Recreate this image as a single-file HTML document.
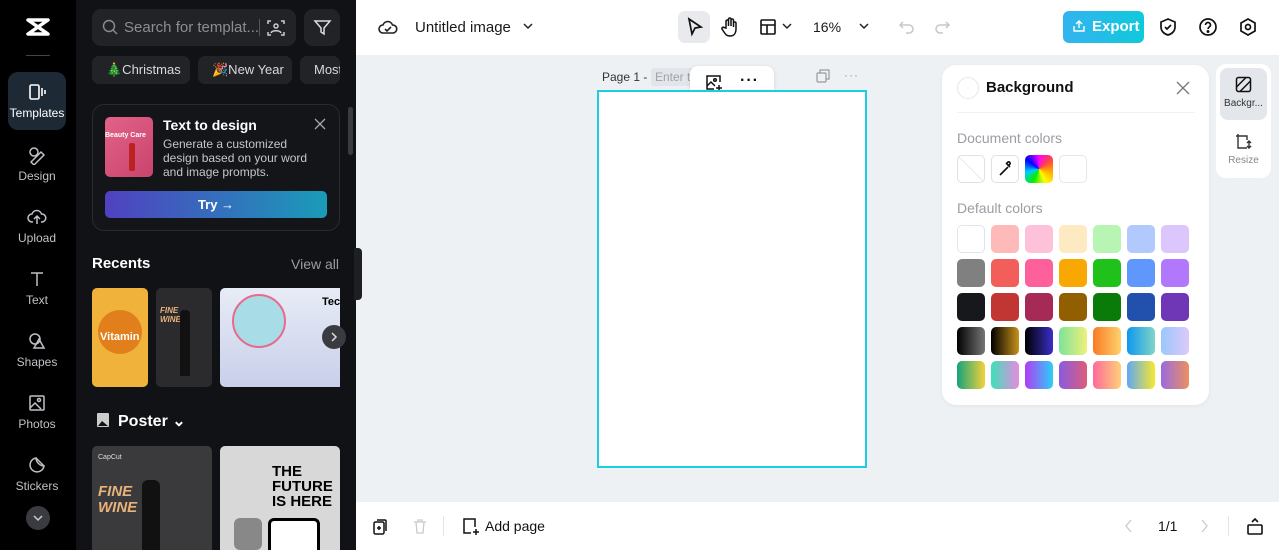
<!DOCTYPE html>
<html><head><meta charset="utf-8"><style>
*{box-sizing:border-box;margin:0;padding:0}
html,body{width:1279px;height:550px;overflow:hidden}
body{font-family:"Liberation Sans",sans-serif;background:#eef1f4;position:relative}
.a{position:absolute}
.rail{left:0;top:0;width:76px;height:550px;background:#000}
.ri{position:absolute;left:8px;width:58px;text-align:center;color:#bfc1c6;font-size:12px}
.ri svg{display:block;margin:0 auto 4px}
.panel{left:76px;top:0;width:280px;height:550px;background:#111215}
.chip{position:absolute;top:56px;height:28px;border-radius:7px;background:#222327;color:#d9dadd;font-size:13px;line-height:28px;padding-left:14px}
.sw{position:absolute;width:28px;height:28px;border-radius:5px}
.top{left:356px;top:0;width:923px;height:55px;background:#fff}
.bot{left:356px;top:502px;width:923px;height:48px;background:#fff}
</style></head><body>
<div class="a rail">
 <svg class="a" style="left:24px;top:16px" width="28" height="22" viewBox="0 0 28 22"><path d="M4 4h20L4 18h20L4 4z" fill="none" stroke="#fff" stroke-width="3.5" stroke-linejoin="round"/></svg>
 <div class="a" style="left:26px;top:55px;width:24px;height:1px;background:#444"></div>
 <div class="ri" style="top:72px;height:58px;background:#1d2a36;border-radius:10px;color:#fff;padding-top:10px"><svg width="20" height="20" viewBox="0 0 20 20" fill="none" stroke="#fff" stroke-width="1.6"><rect x="3" y="3" width="9" height="14" rx="1.5"/><path d="M15 6v8M18 8v4"/></svg>Templates</div>
 <div class="ri" style="top:145px"><svg width="20" height="20" viewBox="0 0 20 20" fill="none" stroke="#bfc1c6" stroke-width="1.5"><circle cx="7" cy="7" r="4"/><path d="M4 17l10-10 3 3-10 10z"/></svg>Design</div>
 <div class="ri" style="top:207px"><svg width="20" height="20" viewBox="0 0 20 20" fill="none" stroke="#bfc1c6" stroke-width="1.5"><path d="M6 15H5a4 4 0 010-8 5 5 0 019.5 0A4 4 0 0115 15h-1M10 17v-7M7 12l3-3 3 3"/></svg>Upload</div>
 <div class="ri" style="top:269px"><svg width="20" height="20" viewBox="0 0 20 20" fill="none" stroke="#bfc1c6" stroke-width="1.5"><path d="M4 4h12M10 4v13"/></svg>Text</div>
 <div class="ri" style="top:331px"><svg width="20" height="20" viewBox="0 0 20 20" fill="none" stroke="#bfc1c6" stroke-width="1.5"><circle cx="8" cy="8" r="5"/><path d="M12 8l5 9H7z"/></svg>Shapes</div>
 <div class="ri" style="top:393px"><svg width="20" height="20" viewBox="0 0 20 20" fill="none" stroke="#bfc1c6" stroke-width="1.5"><rect x="3" y="3" width="14" height="14" rx="1"/><circle cx="12" cy="7" r="1.5"/><path d="M3 15l5-5 6 6"/></svg>Photos</div>
 <div class="ri" style="top:455px"><svg width="20" height="20" viewBox="0 0 20 20" fill="none" stroke="#bfc1c6" stroke-width="1.5"><path d="M17 11A7 7 0 119 3c0 4 4 8 8 8zM9 3l8 8"/></svg>Stickers</div>
 <div class="a" style="left:26px;top:506px;width:24px;height:24px;border-radius:12px;background:#3a3b40"><svg width="24" height="24" viewBox="0 0 24 24"><path d="M8 10l4 4 4-4" fill="none" stroke="#ccc" stroke-width="1.5"/></svg></div>
</div>
<div class="a panel">
 <div class="a" style="left:16px;top:9px;width:204px;height:37px;border-radius:9px;background:#222327;color:#8b8d93;font-size:15px;line-height:37px;padding-left:32px">Search for templat...</div>
 <svg class="a" style="left:26px;top:19px" width="16" height="16" viewBox="0 0 16 16" fill="none" stroke="#8b8d93" stroke-width="1.4"><circle cx="7" cy="7" r="5.5"/><path d="M11 11l4 4"/></svg>
 <div class="a" style="left:183px;top:19px;width:1px;height:17px;background:#555"></div>
 <svg class="a" style="left:190px;top:18px" width="20" height="20" viewBox="0 0 20 20" fill="none" stroke="#ccc" stroke-width="1.5"><path d="M2 6V3h3M15 3h3v3M18 14v3h-3M5 17H2v-3"/><circle cx="10" cy="8" r="2"/><path d="M5 15c1-3 9-3 10 0"/></svg>
 <div class="a" style="left:228px;top:9px;width:36px;height:37px;border-radius:9px;background:#222327"><svg width="36" height="37" viewBox="0 0 36 37" fill="none" stroke="#ddd" stroke-width="1.5"><path d="M11 12h15l-6 7v6l-3-2v-4z"/></svg></div>
 <div class="chip" style="left:16px;width:98px">🎄Christmas</div>
 <div class="chip" style="left:122px;width:94px">🎉New Year</div>
 <div class="chip" style="left:224px;width:40px;overflow:hidden">Most</div>
 <div class="a" style="left:16px;top:104px;width:248px;height:127px;border:1px solid #2a2b30;border-radius:12px;background:#141519"></div>
 <div class="a" style="left:29px;top:117px;width:48px;height:60px;border-radius:5px;background:linear-gradient(135deg,#e3628a,#c9446c)"><div style="color:#fff;font-size:7px;font-weight:bold;margin-top:15px">Beauty Care</div><div style="position:absolute;left:24px;top:26px;width:6px;height:28px;background:#b22;border-radius:2px"></div></div>
 <div class="a" style="left:87px;top:117px;color:#fff;font-size:14px;font-weight:bold">Text to design</div>
 <div class="a" style="left:87px;top:137px;color:#c5c6ca;font-size:12px;line-height:14px;width:156px">Generate a customized design based on your word and image prompts.</div>
 <svg class="a" style="left:238px;top:118px" width="12" height="12" viewBox="0 0 12 12" stroke="#aaa" stroke-width="1.3"><path d="M1 1l10 10M11 1L1 11"/></svg>
 <div class="a" style="left:29px;top:191px;width:222px;height:27px;border-radius:5px;background:linear-gradient(90deg,#5041c0,#1a9bb8);color:#fff;font-size:13px;font-weight:bold;text-align:center;line-height:27px">Try →</div>
 <div class="a" style="left:272px;top:107px;width:5px;height:48px;border-radius:3px;background:#3a3b40"></div>
 <div class="a" style="left:16px;top:255px;color:#fff;font-size:15px;font-weight:bold">Recents</div>
 <div class="a" style="left:215px;top:256px;color:#9a9ca2;font-size:14px">View all</div>
 <div class="a" style="left:16px;top:288px;width:56px;height:99px;border-radius:5px;background:#f0b23a"><div style="position:absolute;left:6px;top:22px;width:44px;height:44px;border-radius:22px;background:#e07f1c"></div><div style="position:absolute;left:8px;top:43px;color:#fff;font-size:11px;font-weight:bold">Vitamin</div></div>
 <div class="a" style="left:80px;top:288px;width:56px;height:99px;border-radius:5px;background:#2b2b2d"><div style="position:absolute;left:4px;top:18px;color:#e8b27a;font-size:8px;font-weight:bold;font-style:italic">FINE<br>WINE</div><div style="position:absolute;left:24px;top:22px;width:10px;height:66px;background:#111;border-radius:4px 4px 0 0"></div></div>
 <div class="a" style="left:144px;top:288px;width:120px;height:99px;border-radius:5px 0 0 5px;background:linear-gradient(#e7ecf6,#c9cfea);overflow:hidden"><div style="position:absolute;left:12px;top:6px;width:54px;height:54px;border-radius:27px;border:2px solid #e86a8c;background:#a8dde8"></div><div style="position:absolute;left:102px;top:8px;font-size:11px;font-weight:bold">Tec</div></div>
 <div class="a" style="left:246px;top:325px;width:24px;height:24px;border-radius:12px;background:#3a3b40"><svg width="24" height="24" viewBox="0 0 24 24"><path d="M10 8l4 4-4 4" fill="none" stroke="#ddd" stroke-width="1.5"/></svg></div>
 <svg class="a" style="left:20px;top:412px" width="14" height="16" viewBox="0 0 14 16"><rect x="1" y="1" width="12" height="14" rx="1" fill="#ccc"/><path d="M2 14l4-5 6 5z" fill="#111"/></svg>
 <div class="a" style="left:42px;top:411px;color:#fff;font-size:16px;font-weight:bold">Poster ⌄</div>
 <div class="a" style="left:16px;top:446px;width:120px;height:104px;border-radius:5px 5px 0 0;background:#3a3a3c"><div style="position:absolute;left:6px;top:38px;color:#e8b27a;font-size:15px;font-weight:bold;font-style:italic;line-height:16px">FINE<br>WINE</div><div style="position:absolute;left:50px;top:34px;width:18px;height:70px;background:#111;border-radius:6px 6px 0 0"></div><div style="position:absolute;left:6px;top:8px;color:#ddd;font-size:7px">CapCut</div></div>
 <div class="a" style="left:144px;top:446px;width:120px;height:104px;border-radius:5px 5px 0 0;background:#d8d8d8;overflow:hidden"><div style="position:absolute;left:52px;top:18px;color:#000;font-size:15px;font-weight:bold;line-height:15px">THE<br>FUTURE<br>IS HERE</div><div style="position:absolute;left:48px;top:72px;width:52px;height:40px;border:3px solid #000;border-radius:6px;background:#fff"></div><div style="position:absolute;left:14px;top:72px;width:28px;height:32px;border-radius:6px;background:#888"></div></div>
</div>
<div class="a" style="left:354px;top:248px;width:8px;height:52px;background:#1e1f22;border-radius:0 4px 4px 0"></div>
<div class="a top">
 <svg class="a" style="left:22px;top:18px" width="20" height="18" viewBox="0 0 20 18" fill="none" stroke="#222" stroke-width="1.6"><path d="M5 15a4 4 0 010-8 5 5 0 019.5 0A4 4 0 0115 15z"/><path d="M7 11l2 2 4-4"/></svg>
 <div class="a" style="left:59px;top:19px;font-size:15px;color:#1a1a1a">Untitled image</div>
 <svg class="a" style="left:166px;top:21px" width="12" height="10" viewBox="0 0 12 10"><path d="M2 3l4 4 4-4" fill="none" stroke="#222" stroke-width="1.5"/></svg>
 <div class="a" style="left:322px;top:11px;width:32px;height:32px;border-radius:7px;background:#e8eaed"></div>
 <svg class="a" style="left:330px;top:17px" width="18" height="20" viewBox="0 0 18 20" fill="none" stroke="#111" stroke-width="1.7"><path d="M3 2l12 8-6 1-3 6z"/></svg>
 <svg class="a" style="left:364px;top:16px" width="20" height="22" viewBox="0 0 20 22" fill="none" stroke="#111" stroke-width="1.5"><path d="M6 12V5a1.3 1.3 0 012.5 0v5V3a1.3 1.3 0 012.5 0v7V4a1.3 1.3 0 012.5 0v7V7a1.3 1.3 0 012.5 0v6c0 4-2 7-6 7-3 0-4-1-6-4l-2-3a1.3 1.3 0 012-1.5z"/></svg>
 <svg class="a" style="left:403px;top:18px" width="18" height="18" viewBox="0 0 18 18" fill="none" stroke="#111" stroke-width="1.6"><rect x="2" y="2" width="14" height="14" rx="1"/><path d="M2 7h14M8 7v9"/></svg>
 <svg class="a" style="left:425px;top:21px" width="12" height="10" viewBox="0 0 12 10"><path d="M2 3l4 4 4-4" fill="none" stroke="#222" stroke-width="1.5"/></svg>
 <div class="a" style="left:457px;top:19px;font-size:14px;color:#1a1a1a">16%</div>
 <svg class="a" style="left:502px;top:21px" width="12" height="10" viewBox="0 0 12 10"><path d="M2 3l4 4 4-4" fill="none" stroke="#222" stroke-width="1.5"/></svg>
 <svg class="a" style="left:542px;top:18px" width="18" height="18" viewBox="0 0 18 18" fill="none" stroke="#c5c7cc" stroke-width="1.5"><path d="M5 4L2 7l3 3M2 7h9a4 4 0 010 8H8"/></svg>
 <svg class="a" style="left:577px;top:18px" width="18" height="18" viewBox="0 0 18 18" fill="none" stroke="#c5c7cc" stroke-width="1.5"><path d="M13 4l3 3-3 3M16 7H7a4 4 0 000 8h3"/></svg>
 <div class="a" style="left:707px;top:11px;width:81px;height:32px;border-radius:6px;background:linear-gradient(90deg,#33b3f0,#0fc9db);color:#fff;font-weight:bold;font-size:15px;line-height:32px;padding-left:29px">Export</div>
 <svg class="a" style="left:716px;top:19px" width="14" height="14" viewBox="0 0 14 14" fill="none" stroke="#fff" stroke-width="1.4"><path d="M2 7v5h10V7M7 9V2M4 5l3-3 3 3"/></svg>
 <svg class="a" style="left:802px;top:17px" width="20" height="20" viewBox="0 0 20 20" fill="none" stroke="#111" stroke-width="1.7"><path d="M10 2l7 3v5c0 4-3 7-7 8-4-1-7-4-7-8V5z"/><path d="M7 10l2 2 4-4"/></svg>
 <svg class="a" style="left:842px;top:17px" width="20" height="20" viewBox="0 0 20 20" fill="none" stroke="#111" stroke-width="1.7"><circle cx="10" cy="10" r="8"/><path d="M7.5 8a2.5 2.5 0 115 0c0 2-2.5 2-2.5 4"/><circle cx="10" cy="14.5" r=".6" fill="#111"/></svg>
 <svg class="a" style="left:882px;top:17px" width="20" height="20" viewBox="0 0 20 20" fill="none" stroke="#111" stroke-width="1.7"><path d="M10 2l7 4v8l-7 4-7-4V6z"/><circle cx="10" cy="10" r="2.5"/></svg>
</div>
<div class="a" style="left:602px;top:70px;font-size:12px;color:#333">Page 1 -</div>
<div class="a" style="left:651px;top:68px;width:50px;height:18px;background:#e2e5e9;border-radius:3px;color:#a0a3a8;font-size:12px;padding-left:4px;line-height:18px">Enter t</div>
<div class="a" style="left:690px;top:66px;width:84px;height:34px;background:#fff;border-radius:8px;box-shadow:0 1px 4px rgba(0,0,0,.12)"></div>
<svg class="a" style="left:705px;top:74px" width="18" height="18" viewBox="0 0 18 18" fill="none" stroke="#111" stroke-width="1.5"><path d="M15 8V2H2v13h7"/><circle cx="10" cy="6" r="1.3"/><path d="M2 12l4-4 4 4M14 11v6M11 14h6"/></svg>
<div class="a" style="left:740px;top:72px;font-size:16px;font-weight:bold;letter-spacing:1px;color:#111">···</div>
<svg class="a" style="left:816px;top:69px" width="14" height="14" viewBox="0 0 14 14" fill="none" stroke="#999" stroke-width="1.2"><rect x="1" y="4" width="9" height="9" rx="1"/><path d="M4 4V1h9v9h-3"/></svg>
<div class="a" style="left:844px;top:68px;font-size:12px;color:#999;letter-spacing:1px">···</div>
<div class="a" style="left:597px;top:90px;width:270px;height:378px;background:#fff;border:2px solid #1ccde0"></div>
<div class="a" style="left:942px;top:65px;width:267px;height:340px;background:#fff;border-radius:14px;box-shadow:0 1px 4px rgba(0,0,0,.06)">
 <div class="a" style="left:15px;top:12px;width:22px;height:22px;border-radius:11px;border:1px solid #e5e7ea"></div>
 <div class="a" style="left:44px;top:14px;font-size:15px;font-weight:bold;color:#111">Background</div>
 <svg class="a" style="left:234px;top:16px" width="14" height="14" viewBox="0 0 14 14" stroke="#777" stroke-width="1.3"><path d="M1 1l12 12M13 1L1 13"/></svg>
 <div class="a" style="left:15px;top:47px;width:238px;height:1px;background:#eef0f2"></div>
 <div class="a" style="left:15px;top:65px;font-size:14px;color:#9a9da3">Document colors</div>
 <div class="sw" style="left:15px;top:90px;border:1px solid #dfe1e4;background:linear-gradient(45deg,transparent 49%,#ccc 50%,transparent 51%)"></div>
 <div class="sw" style="left:49px;top:90px;border:1px solid #dfe1e4"><svg width="26" height="26" viewBox="0 0 26 26" fill="none" stroke="#111" stroke-width="1.6"><path d="M8 19l8-8M15 8l3 3M16 10l2-2a1.5 1.5 0 00-2-2l-2 2"/></svg></div>
 <div class="sw" style="left:83px;top:90px;background:conic-gradient(from 0deg,#f0f,#f44,#fa0,#ff0,#0e0,#0cf,#00f,#f0f)"></div>
 <div class="sw" style="left:117px;top:90px;border:1px solid #e5e7ea"></div>
 <div class="a" style="left:15px;top:135px;font-size:14px;color:#9a9da3">Default colors</div>
 <div class="sw" style="left:15px;top:160px;border:1px solid #e2e4e7;background:#fff"></div>
 <div class="sw" style="left:49px;top:160px;background:#fdbab8"></div>
 <div class="sw" style="left:83px;top:160px;background:#fdc1d9"></div>
 <div class="sw" style="left:117px;top:160px;background:#feeac2"></div>
 <div class="sw" style="left:151px;top:160px;background:#b9f5b2"></div>
 <div class="sw" style="left:185px;top:160px;background:#b1c9fc"></div>
 <div class="sw" style="left:219px;top:160px;background:#dcc7fd"></div>
 <div class="sw" style="left:15px;top:194px;background:#808080"></div>
 <div class="sw" style="left:49px;top:194px;background:#f25f5a"></div>
 <div class="sw" style="left:83px;top:194px;background:#fe609c"></div>
 <div class="sw" style="left:117px;top:194px;background:#f9a702"></div>
 <div class="sw" style="left:151px;top:194px;background:#21c11b"></div>
 <div class="sw" style="left:185px;top:194px;background:#6097fc"></div>
 <div class="sw" style="left:219px;top:194px;background:#b177fd"></div>
 <div class="sw" style="left:15px;top:228px;background:#17181c"></div>
 <div class="sw" style="left:49px;top:228px;background:#c13532"></div>
 <div class="sw" style="left:83px;top:228px;background:#a52a55"></div>
 <div class="sw" style="left:117px;top:228px;background:#925f00"></div>
 <div class="sw" style="left:151px;top:228px;background:#0a7b08"></div>
 <div class="sw" style="left:185px;top:228px;background:#2250ad"></div>
 <div class="sw" style="left:219px;top:228px;background:#6f36b6"></div>
 <div class="sw" style="left:15px;top:262px;background:linear-gradient(90deg,#000,#777)"></div>
 <div class="sw" style="left:49px;top:262px;background:linear-gradient(90deg,#000,#c8921a)"></div>
 <div class="sw" style="left:83px;top:262px;background:linear-gradient(90deg,#000,#3a2fc8)"></div>
 <div class="sw" style="left:117px;top:262px;background:linear-gradient(90deg,#7ee39a,#eef07a)"></div>
 <div class="sw" style="left:151px;top:262px;background:linear-gradient(90deg,#f97a23,#fdd26e)"></div>
 <div class="sw" style="left:185px;top:262px;background:linear-gradient(90deg,#0e98ef,#7fd5c6)"></div>
 <div class="sw" style="left:219px;top:262px;background:linear-gradient(90deg,#9ac8fb,#ddc9fb)"></div>
 <div class="sw" style="left:15px;top:296px;background:linear-gradient(90deg,#17a37a,#f3d23a)"></div>
 <div class="sw" style="left:49px;top:296px;background:linear-gradient(90deg,#3ee0b8,#e78ae0)"></div>
 <div class="sw" style="left:83px;top:296px;background:linear-gradient(90deg,#b33af6,#2ad0f7)"></div>
 <div class="sw" style="left:117px;top:296px;background:linear-gradient(90deg,#8a5ae0,#dc5d7a)"></div>
 <div class="sw" style="left:151px;top:296px;background:linear-gradient(90deg,#fe6a9a,#fed078)"></div>
 <div class="sw" style="left:185px;top:296px;background:linear-gradient(90deg,#5fa8f5,#f7e830)"></div>
 <div class="sw" style="left:219px;top:296px;background:linear-gradient(90deg,#9a6ae0,#ec9060)"></div>
</div>
<div class="a" style="left:1216px;top:64px;width:55px;height:114px;background:#fff;border-radius:10px">
 <div class="a" style="left:4px;top:4px;width:47px;height:52px;background:#e3e6ea;border-radius:8px"></div>
 <svg class="a" style="left:19px;top:12px" width="17" height="17" viewBox="0 0 17 17" fill="none" stroke="#111" stroke-width="1.5"><rect x="1.5" y="1.5" width="14" height="14" rx="2"/><path d="M1.5 11L11 1.5M5 15.5l10.5-10.5"/></svg>
 <div class="a" style="left:0;top:34px;width:55px;text-align:center;font-size:10px;color:#333">Backgr...</div>
 <svg class="a" style="left:19px;top:69px" width="17" height="17" viewBox="0 0 17 17" fill="none" stroke="#333" stroke-width="1.4"><path d="M3 1v14h9M1 3h11v4M14 8v7M12 10l2-2 2 2M12 13l2 2 2-2"/></svg>
 <div class="a" style="left:0;top:91px;width:55px;text-align:center;font-size:10px;color:#888">Resize</div>
</div>
<div class="a bot">
 <svg class="a" style="left:16px;top:16px" width="16" height="17" viewBox="0 0 16 17" fill="none" stroke="#111" stroke-width="1.5"><rect x="2" y="4" width="10" height="12" rx="1.5"/><path d="M5 2h8a1 1 0 011 1v10"/><path d="M7 8v4M5 10h4"/></svg>
 <svg class="a" style="left:57px;top:16px" width="14" height="16" viewBox="0 0 14 16" fill="none" stroke="#c8cacf" stroke-width="1.3"><path d="M1 4h12M5 4V2h4v2M3 4l1 11h6l1-11"/></svg>
 <div class="a" style="left:87px;top:14px;width:1px;height:20px;background:#e3e5e8"></div>
 <svg class="a" style="left:106px;top:15px" width="18" height="19" viewBox="0 0 18 19" fill="none" stroke="#111" stroke-width="1.5"><path d="M9 16H2V2h11v8"/><path d="M14 12v6M11 15h6"/></svg>
 <div class="a" style="left:129px;top:16px;font-size:14px;color:#111">Add page</div>
 <svg class="a" style="left:768px;top:17px" width="10" height="14" viewBox="0 0 10 14"><path d="M7 1L2 7l5 6" fill="none" stroke="#c8cacf" stroke-width="1.3"/></svg>
 <div class="a" style="left:802px;top:16px;font-size:14px;color:#111">1/1</div>
 <svg class="a" style="left:843px;top:17px" width="10" height="14" viewBox="0 0 10 14"><path d="M3 1l5 6-5 6" fill="none" stroke="#c8cacf" stroke-width="1.3"/></svg>
 <div class="a" style="left:872px;top:14px;width:1px;height:20px;background:#e3e5e8"></div>
 <svg class="a" style="left:890px;top:14px" width="18" height="20" viewBox="0 0 18 20" fill="none" stroke="#111" stroke-width="1.6"><rect x="2" y="9" width="14" height="9" rx="1"/><path d="M6 6l3-3 3 3"/></svg>
</div>
</body></html>
